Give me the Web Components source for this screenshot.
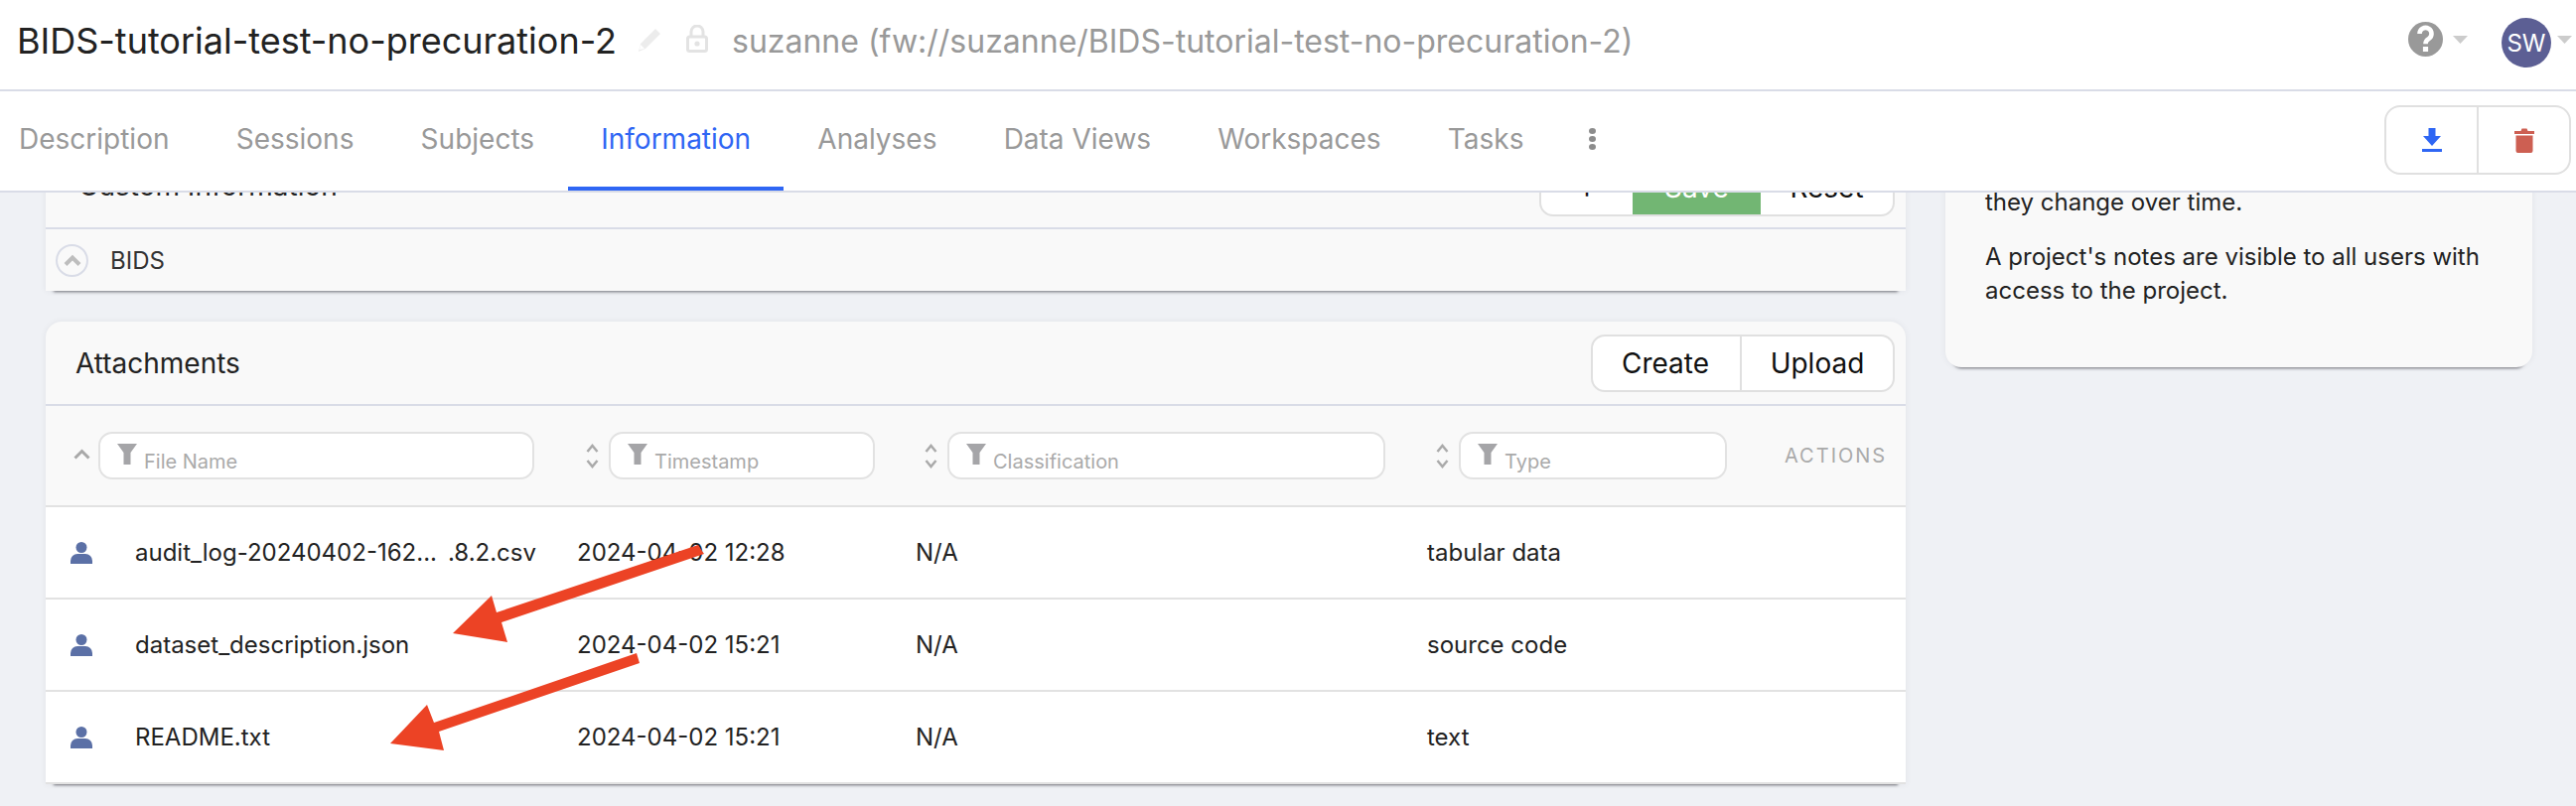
<!DOCTYPE html>
<html>
<head>
<meta charset="utf-8">
<title>Information</title>
<style>
    html, body { margin: 0; padding: 0; height: 100%; }
    body { font-family: Inter, "Liberation Sans", sans-serif; color: #222; background: #eff1f5; width: 2594px; height: 812px; overflow: hidden; display: flex; flex-direction: column; }
</style>
</head>
<body>
<top-bar title="BIDS-tutorial-test-no-precuration-2" owner="suzanne (fw://suzanne/BIDS-tutorial-test-no-precuration-2)" initials="SW"></top-bar>
<tab-bar active="Information" tabs="Description,Sessions,Subjects,Information,Analyses,Data Views,Workspaces,Tasks"></tab-bar>
<page-body>
    <custom-info-card slot="left"></custom-info-card>
    <attachments-card slot="left">
        <file-row name="audit_log-20240402-162..." ext=".8.2.csv" time="2024-04-02 12:28" kind="N/A" type="tabular data"></file-row>
        <file-row name="dataset_description.json" time="2024-04-02 15:21" kind="N/A" type="source code"></file-row>
        <file-row name="README.txt" time="2024-04-02 15:21" kind="N/A" type="text"></file-row>
    </attachments-card>
    <notes-card slot="right">
        <p>they change over time.</p>
        <p>A project's notes are visible to all users with access to the project.</p>
    </notes-card>
</page-body>
<red-arrows></red-arrows>

<script>
const TABLE_COLUMNS = "535px 341px 515px 360px 1fr";
const CARD_SHADOW = "0 9px 3px -8px rgba(60,60,70,.7), 0 0 6px rgba(60,60,80,.08)";

class TopBar extends HTMLElement {
    constructor() {
        super();
        this.myRoot = this.attachShadow({ mode: "open" });
        this.myRoot.innerHTML = `
        <style>
            :host { display: flex; align-items: center; box-sizing: border-box; height: 92px; padding-left: 17px; background: #fff; border-bottom: 2px solid #d9dce7; flex: none; }
            h1 { margin: 0; font-size: 36px; font-weight: 400; color: #222; white-space: nowrap; position: relative; top: -4px; }
            .pencil { margin-left: 22px; width: 23px; height: 24px; position: relative; top: -5px; }
            .lock { margin-left: 25px; width: 22px; height: 28px; position: relative; top: -6px; }
            .owner { margin-left: 24px; font-size: 32px; color: #999; white-space: nowrap; position: relative; top: -4px; }
            .right { margin-left: auto; display: flex; align-items: center; }
            .help { width: 35px; height: 35px; position: relative; top: -6px; }
            .caret { width: 15px; height: 8px; margin-left: 10px; position: relative; top: -5px; }
            .avatar { width: 50px; height: 50px; border-radius: 50%; background: #5c5f94; color: #fff; font-size: 24px; display: flex; align-items: center; justify-content: center; margin-left: 34px; position: relative; top: -2px; }
            .right .last { margin-left: 6px; margin-right: 4px; }
        </style>
        <h1>${this.getAttribute("title")}</h1>
        <svg class="pencil" viewBox="0 0 23 24"><path fill="#ececec" d="M17 1l5 5L7 21l-7 3 2-8zM2 17l-1 5 5-1z"/></svg>
        <svg class="lock" viewBox="0 0 22 28"><path fill="none" stroke="#e3e3e3" stroke-width="3" d="M5 12V7a6 6 0 0 1 12 0v5"/><rect x="1.500" y="12" width="19" height="14.500" rx="2" fill="none" stroke="#e3e3e3" stroke-width="3"/><circle cx="11" cy="19" r="2.600" fill="#e3e3e3"/></svg>
        <span class="owner">${this.getAttribute("owner")}</span>
        <div class="right">
            <svg class="help" viewBox="-17.5 -17.5 35 35"><circle r="17.500" fill="#999"/><path fill="none" stroke="#fff" stroke-width="4.600" d="M-6 -5.500a6 6 0 1 1 9 5.200c-2 1.200-3 2-3 5"/><rect x="-2.600" y="7.500" width="5.200" height="5" fill="#fff"/></svg>
            <svg class="caret" viewBox="0 0 15 8"><path fill="#ccc" d="M0 0h15L7.500 8z"/></svg>
            <div class="avatar">${this.getAttribute("initials")}</div>
            <svg class="caret last" viewBox="0 0 15 8"><path fill="#ccc" d="M0 0h15L7.500 8z"/></svg>
        </div>
        `;
    }
}

class TabBar extends HTMLElement {
    constructor() {
        super();
        this.myRoot = this.attachShadow({ mode: "open" });
        const active = this.getAttribute("active");
        let tabs = "";
        for(let name of this.getAttribute("tabs").split(",")) {
            tabs += `<a class="${name === active ? "on" : ""}">${name}</a>`;
        }
        this.myRoot.innerHTML = `
        <style>
            :host { display: flex; align-items: stretch; box-sizing: border-box; height: 102px; background: #fff; border-bottom: 2px solid #d9dce7; flex: none; position: relative; z-index: 2; }
            nav { display: flex; gap: 1.200px; margin-left: -14px; }
            a { display: flex; align-items: center; padding: 0 33px; font-size: 28px; color: #999; border-bottom: 4px solid transparent; white-space: nowrap; }
            a.on { color: #2f66f4; border-bottom-color: #2f66f4; }
            .dots { display: flex; flex-direction: column; justify-content: space-between; width: 7px; height: 22px; margin: 37px 0 0 33px; }
            .dots i { width: 7px; height: 6px; border-radius: 50%; background: #8c8c8c; }
            .actions { margin: 14px 5px 0 auto; width: 188px; height: 70px; display: flex; box-sizing: border-box; border: 2px solid #e0e0e0; border-radius: 16px; }
            .actions div { flex: 1; display: flex; align-items: center; justify-content: center; }
            .actions div + div { border-left: 2px solid #e0e0e0; }
        </style>
        <nav>${tabs}</nav>
        <div class="dots"><i></i><i></i><i></i></div>
        <div class="actions">
            <div><svg width="20" height="24" viewBox="0 0 20 24"><path fill="#2f66f4" d="M6.500 0h7v8H19l-9 10L1 8h5.500z"/><rect x="0" y="21" width="20" height="3" fill="#2f66f4"/></svg></div>
            <div><svg width="20" height="25" viewBox="0 0 20 25"><path fill="#cd5f52" d="M0 3h6.500l1-2.500h5l1 2.500H20v3H0zM1.500 7.500h17V23a2 2 0 0 1-2 2h-13a2 2 0 0 1-2-2z"/></svg></div>
        </div>
        `;
    }
}

class PageBody extends HTMLElement {
    constructor() {
        super();
        this.attachShadow({ mode: "open" }).innerHTML = `
        <style>
            :host { display: flex; flex: 1; min-height: 0; overflow: hidden; align-items: flex-start; gap: 40px; padding-left: 46px; }
            .left { width: 1873px; flex: none; margin-top: -47px; display: flex; flex-direction: column; gap: 31px; }
            .right { width: 591px; flex: none; margin-top: -47px; }
        </style>
        <div class="left"><slot name="left"></slot></div>
        <div class="right"><slot name="right"></slot></div>
        `;
    }
}

class BtnGroup extends HTMLElement {
    constructor() {
        super();
        this.attachShadow({ mode: "open" }).innerHTML = `
        <style>
            :host { display: flex; box-sizing: border-box; height: 58px; border: 2px solid #e0e0e0; border-radius: 14px; background: #fff; font-size: 28px; color: #111; overflow: hidden; }
            ::slotted(span) { display: flex; align-items: center; justify-content: center; box-sizing: border-box; }
            ::slotted(span:not(:first-child)) { border-left: 2px solid #e0e0e0; }
        </style>
        <slot></slot>
        `;
    }
}

class CustomInfoCard extends HTMLElement {
    constructor() {
        super();
        this.attachShadow({ mode: "open" }).innerHTML = `
        <style>
            :host { display: block; background: #f9f9f9; box-shadow: ${CARD_SHADOW}; }
            .head { display: flex; justify-content: space-between; box-sizing: border-box; height: 84px; padding: 13px 11px 0 33px; border-bottom: 2px solid #d9dce7; }
            .name { font-size: 28px; line-height: 54px; color: #222; }
            .row { display: flex; align-items: center; height: 62px; padding-left: 10px; font-size: 24px; color: #333; }
            .circle { width: 33px; height: 33px; box-sizing: border-box; border: 2px solid #d9dce7; border-radius: 50%; margin-right: 22px; display: flex; align-items: center; justify-content: center; }
            .add { width: 92px; }
            .save { width: 129px; background: #72b673; color: #fff; border-left: 0 !important; }
            .reset { width: 133px; border-left: 0 !important; }
        </style>
        <div class="head">
            <span class="name">Custom Information</span>
            <btn-group>
                <span class="add">+</span>
                <span class="save">Save</span>
                <span class="reset">Reset</span>
            </btn-group>
        </div>
        <div class="row">
            <span class="circle"><svg width="18" height="12" viewBox="0 0 18 12"><path fill="none" stroke="#bdbdbd" stroke-width="4" d="M2 10.500l7-7 7 7"/></svg></span>
            <span>BIDS</span>
        </div>
        `;
    }
}

class SortIcon extends HTMLElement {
    constructor() {
        super();
        const only = this.hasAttribute("up");
        this.attachShadow({ mode: "open" }).innerHTML = `
        <style>
            :host { display: block; flex: none; line-height: 0; }
        </style>
        ${only
            ? `<svg width="17" height="11" viewBox="0 0 17 11"><path fill="none" stroke="#a8a8a8" stroke-width="3" d="M1.500 9.500l7-7 7 7"/></svg>`
            : `<svg width="13" height="25" viewBox="0 0 13 25"><path fill="none" stroke="#aaa" stroke-width="2.500" d="M1.500 8l5-6 5 6M1.500 17l5 6 5-6"/></svg>`}
        `;
    }
}

class FilterBox extends HTMLElement {
    constructor() {
        super();
        this.attachShadow({ mode: "open" }).innerHTML = `
        <style>
            :host { display: block; flex: 1; box-sizing: border-box; height: 48px; border: 2px solid #e2e2e2; border-radius: 14px; background: #fff; padding-left: 17px; color: #aaa; font-size: 20px; }
            div { display: flex; align-items: flex-start; }
            svg { margin-top: 10px; flex: none; }
            span { margin: 16px 0 0 7px; line-height: 24px; }
        </style>
        <div><svg width="20" height="21" viewBox="0 0 20 21"><path fill="#a5a5a8" d="M0 0h20l-6.500 9v12h-7V9z"/></svg><span>${this.getAttribute("label")}</span></div>
        `;
    }
}

class AttachmentsCard extends HTMLElement {
    constructor() {
        super();
        this.attachShadow({ mode: "open" }).innerHTML = `
        <style>
            :host { display: block; background: #f9f9f9; border-radius: 16px 16px 0 0; box-shadow: ${CARD_SHADOW}; }
            .head { display: flex; justify-content: space-between; box-sizing: border-box; height: 85px; padding: 13px 11px 0 30px; border-bottom: 2px solid #d9dce7; }
            .name { font-size: 28px; line-height: 58px; color: #222; }
            .create { width: 148px; padding-right: 2px; }
            .upload { width: 154px; }
            .filters { display: grid; grid-template-columns: ${TABLE_COLUMNS}; height: 102px; box-sizing: border-box; border-bottom: 2px solid #e2e2e2; }
            .cell { display: flex; align-items: center; padding-left: 9px; }
            .cell sort-icon { margin-right: 10px; }
            .cell.first { padding: 0 43px 0 28px; }
            .cell.first sort-icon { margin-right: 8px; position: relative; top: -2px; }
            .actions { display: flex; align-items: center; font-size: 20px; color: #aaa; letter-spacing: 2px; }
        </style>
        <div class="head">
            <span class="name">Attachments</span>
            <btn-group>
                <span class="create">Create</span>
                <span class="upload">Upload</span>
            </btn-group>
        </div>
        <div class="filters">
            <div class="cell first"><sort-icon up></sort-icon><filter-box label="File Name"></filter-box></div>
            <div class="cell" style="padding-right: 41px"><sort-icon></sort-icon><filter-box label="Timestamp"></filter-box></div>
            <div class="cell" style="padding-right: 42px"><sort-icon></sort-icon><filter-box label="Classification"></filter-box></div>
            <div class="cell" style="padding-right: 58px"><sort-icon></sort-icon><filter-box label="Type"></filter-box></div>
            <div class="actions">ACTIONS</div>
        </div>
        <slot></slot>
        `;
    }
}

class FileRow extends HTMLElement {
    constructor() {
        super();
        const ext = this.getAttribute("ext");
        this.attachShadow({ mode: "open" }).innerHTML = `
        <style>
            :host { display: grid; grid-template-columns: ${TABLE_COLUMNS}; align-items: center; height: 93px; box-sizing: border-box; background: #fff; font-size: 24px; color: #222; border-bottom: 2px solid #e2e2e2; }
            .name { display: flex; align-items: center; padding-left: 25px; }
            svg { margin-right: 43px; flex: none; }
            .ext { margin-left: 11px; }
        </style>
        <div class="name">
            <svg width="22" height="22" viewBox="0 0 22 22"><circle cx="11" cy="5.500" r="5.500" fill="#5b70a6"/><path fill="#5b70a6" d="M0 22v-3a7 7 0 0 1 7-7h8a7 7 0 0 1 7 7v3z"/></svg>
            <span>${this.getAttribute("name")}</span>${ext ? `<span class="ext">${ext}</span>` : ""}
        </div>
        <div>${this.getAttribute("time")}</div>
        <div>${this.getAttribute("kind")}</div>
        <div>${this.getAttribute("type")}</div>
        <div></div>
        `;
    }
}

class NotesCard extends HTMLElement {
    constructor() {
        super();
        this.attachShadow({ mode: "open" }).innerHTML = `
        <style>
            :host { display: block; box-sizing: border-box; background: #f9f9f9; border-radius: 0 0 16px 16px; padding: 40px 40px 0; height: 223px; font-size: 24px; line-height: 34px; color: #222; box-shadow: ${CARD_SHADOW}; }
            ::slotted(p) { margin: 0 0 21px; }
        </style>
        <slot></slot>
        `;
    }
}

// annotation arrows drawn on top of the screenshot
class RedArrows extends HTMLElement {
    constructor() {
        super();
        this.attachShadow({ mode: "open" }).innerHTML = `
        <style>
            :host { position: absolute; left: 0; top: 0; width: 2594px; height: 812px; pointer-events: none; z-index: 5; }
        </style>
        <svg width="2594" height="812" viewBox="0 0 2594 812">
            <polygon fill="#ec4325" points="703,549 709,558 505,627 511,647 456,638 495,600 500,617"/>
            <polygon fill="#ec4325" points="641,658 644,668 442,737 447,756 393,749 430,710 437,728"/>
        </svg>
        `;
    }
}

window.customElements.define("top-bar", TopBar);
window.customElements.define("tab-bar", TabBar);
window.customElements.define("page-body", PageBody);
window.customElements.define("btn-group", BtnGroup);
window.customElements.define("custom-info-card", CustomInfoCard);
window.customElements.define("sort-icon", SortIcon);
window.customElements.define("filter-box", FilterBox);
window.customElements.define("attachments-card", AttachmentsCard);
window.customElements.define("file-row", FileRow);
window.customElements.define("notes-card", NotesCard);
window.customElements.define("red-arrows", RedArrows);
</script>
</body>
</html>
